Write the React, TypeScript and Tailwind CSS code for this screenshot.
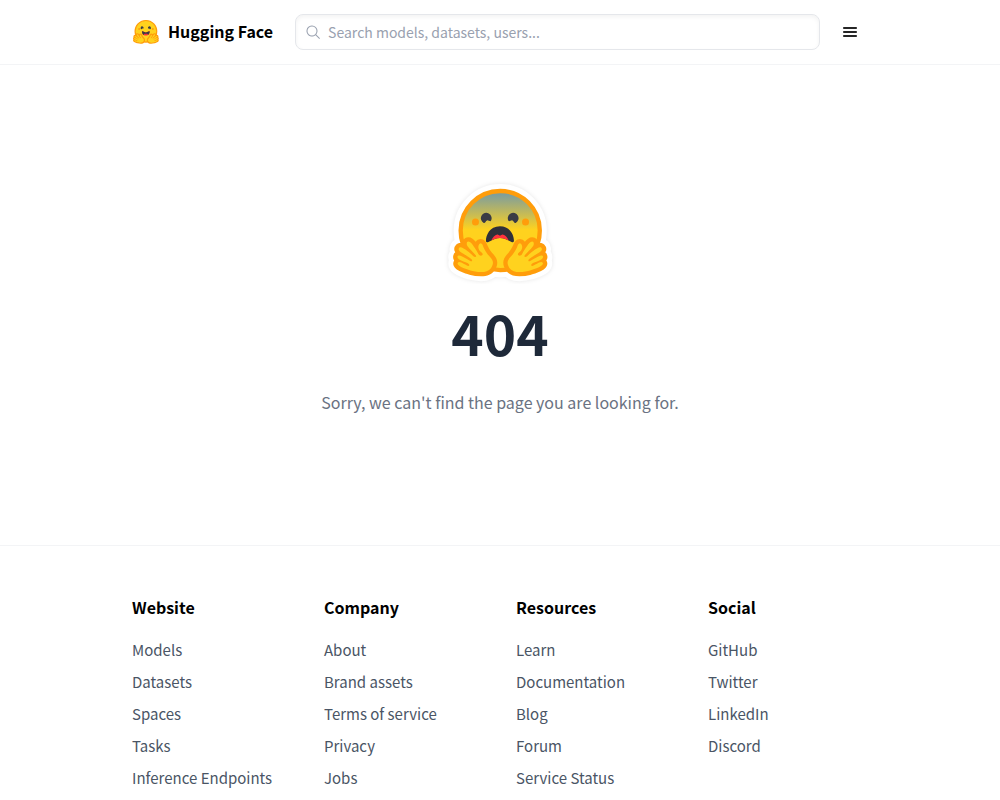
import React, { useState } from 'react';

const HAND =
  'M17.52 48c-1.62 0-3.06.66-4.07 1.87a5.97 5.97 0 0 0-1.33 3.76 7.1 7.1 0 0 0-1.94-.3c-1.55 0-2.95.59-3.94 1.66a5.8 5.8 0 0 0-.8 7 5.3 5.3 0 0 0-1.79 2.82c-.24.9-.48 2.8.8 4.74a5.22 5.22 0 0 0-.37 5.02c1.02 2.32 3.57 4.14 8.52 6.1 3.07 1.22 5.89 2 5.91 2.01a44.33 44.33 0 0 0 10.93 1.6c5.86 0 10.05-1.8 12.46-5.34 3.88-5.69 3.33-10.9-1.7-15.92-2.77-2.78-4.62-6.87-5-7.77-.78-2.66-2.84-5.62-6.25-5.62a5.7 5.7 0 0 0-4.6 2.46c-1-1.26-1.98-2.25-2.86-2.82A7.4 7.4 0 0 0 17.52 48Z';
const PALM =
  'M38.6 76.69c2.75-4.04 2.55-7.07-1.22-10.84-3.78-3.77-5.98-9.3-5.98-9.3s-.82-3.2-2.69-2.9c-1.87.3-3.24 5.08.68 8.01 3.91 2.93-.78 4.92-2.29 2.17-1.5-2.75-5.62-9.82-7.76-11.18-2.13-1.35-3.63-.6-3.13 2.2.5 2.79 9.43 9.55 8.56 11-.87 1.47-3.93-1.71-3.93-1.71s-9.57-8.71-11.66-6.44c-2.08 2.27 1.59 4.17 6.8 7.33 5.23 3.16 5.64 4 4.9 5.2-.75 1.2-12.28-8.53-13.36-4.4-1.08 4.11 11.77 5.3 10.98 8.15-.8 2.85-9.06-5.38-10.74-2.18-1.7 3.21 11.65 6.98 11.76 7.01 4.3 1.12 15.25 3.49 19.08-2.12Z';
const MIRROR = 'translate(94.5 0) scale(-1 1)';

const Hand = () => (
  <>
    <path fill="#FF9D0B" d={HAND} />
    <path fill="#FFD21E" d={PALM} />
  </>
);

const Eyes = () => (
  <path
    fill="#3A3B45"
    d="M58.5 32.3c1.28.44 1.78 3.06 3.07 2.38a5 5 0 1 0-6.76-2.07c.61 1.15 2.55-.72 3.7-.32ZM34.95 32.3c-1.28.44-1.79 3.06-3.07 2.38a5 5 0 1 1 6.76-2.07c-.61 1.15-2.56-.72-3.7-.32Z"
  />
);

const Cheeks = () => (
  <>
    <circle cx="70.71" cy="33.75" r="3.25" fill="#FF9D0B" />
    <circle cx="24.21" cy="33.75" r="3.25" fill="#FF9D0B" />
  </>
);

const Logo = ({ className }: { className?: string }) => (
  <svg className={className} viewBox="0 0 95 88" fill="none" aria-hidden="true">
    <circle cx="47.21" cy="41.75" r="36.75" fill="#FFD21E" stroke="#FF9D0B" strokeWidth="4" />
    <Eyes />
    <path
      fill="#FF323D"
      d="M46.96 56.29c9.83 0 13-8.76 13-13.26 0-2.34-1.57-1.6-4.09-.36-2.33 1.15-5.46 2.74-8.9 2.74-7.19 0-13-6.88-13-2.38s3.16 13.26 13 13.26Z"
    />
    <path
      fill="#3A3B45"
      fillRule="evenodd"
      d="M39.43 54a8.7 8.7 0 0 1 5.3-4.49c.4-.12.81.57 1.24 1.28.4.68.82 1.37 1.24 1.37.45 0 .9-.68 1.33-1.35.45-.7.89-1.38 1.32-1.25a8.61 8.61 0 0 1 5 4.17c3.73-2.94 5.1-7.74 5.1-10.7 0-2.34-1.57-1.6-4.09-.36l-.14.07c-2.31 1.15-5.39 2.67-8.77 2.67s-6.45-1.52-8.77-2.67c-2.6-1.29-4.23-2.1-4.23.29 0 3.05 1.46 8.06 5.47 10.97Z"
    />
    <Cheeks />
    <Hand />
    <g transform={MIRROR}>
      <Hand />
    </g>
  </svg>
);

const Silhouette = () => (
  <>
    <circle cx="47.21" cy="41.75" r="38.75" />
    <path d={HAND} />
    <path d={HAND} transform={MIRROR} />
  </>
);

const ScaredFace = ({ className }: { className?: string }) => (
  <svg className={className} viewBox="-5 -8 104 99" fill="none" aria-hidden="true">
    <defs>
      <linearGradient id="pale" x1="47.2" y1="5" x2="47.2" y2="41" gradientUnits="userSpaceOnUse">
        <stop stopColor="#7299A8" />
        <stop offset="1" stopColor="#FFD21E" />
      </linearGradient>
    </defs>
    <g
      className="drop-shadow-[0_0_2px_rgb(0_0_0/0.1)]"
      fill="#fff"
      stroke="#fff"
      strokeWidth="9"
      strokeLinejoin="round"
    >
      <Silhouette />
    </g>
    <circle cx="47.21" cy="41.75" r="36.75" fill="url(#pale)" stroke="#FF9D0B" strokeWidth="4" />
    <Eyes />
    <path
      fill="#2F303A"
      d="M46.96 37.8c9.83 0 13 8.76 13 13.2 0 2.4-1.6 1.6-4.1.4-2.3-1.2-5.4-2.7-8.9-2.7s-6.5 1.5-8.8 2.7c-2.6 1.2-4.2 2-4.2-.4 0-4.4 3.16-13.2 13-13.2Z"
    />
    <path
      fill="#FF323D"
      d="M39 51c1.2-3 3.2-4.9 5.4-5.6.9-.2 1.7 1 2.6 1s1.7-1.2 2.6-1c2.3.7 4.2 2.6 5.4 5.5-2.5-1.2-5.1-2.2-8-2.2s-5.6 1-8 2.3Z"
    />
    <Cheeks />
    <Hand />
    <g transform={MIRROR}>
      <Hand />
    </g>
  </svg>
);

const columns = [
  { title: 'Website', links: ['Models', 'Datasets', 'Spaces', 'Tasks', 'Inference Endpoints'] },
  { title: 'Company', links: ['About', 'Brand assets', 'Terms of service', 'Privacy', 'Jobs'] },
  { title: 'Resources', links: ['Learn', 'Documentation', 'Blog', 'Forum', 'Service Status'] },
  { title: 'Social', links: ['GitHub', 'Twitter', 'LinkedIn', 'Discord'] },
];

const Header = () => {
  const [query, setQuery] = useState('');

  return (
    <header className="border-b border-gray-100">
      <div className="mx-auto flex h-16 max-w-3xl items-center px-4">
        <a href="#" className="mr-5.5 flex shrink-0 items-center gap-2">
          <Logo className="w-7" />
          <span className="pb-0.5 text-base font-bold whitespace-nowrap text-black">Hugging Face</span>
        </a>
        <div className="relative mr-4 flex-1">
          <input
            type="text"
            aria-label="Search"
            value={query}
            onChange={(e) => setQuery(e.target.value)}
            placeholder="Search models, datasets, users..."
            className="block h-9 w-full rounded-lg border border-gray-200 pr-3 pl-8 text-sm text-gray-900 shadow-inner outline-none placeholder:text-gray-400"
          />
          <svg
            className="pointer-events-none absolute top-0 bottom-0 left-2.5 my-auto w-4 text-gray-400"
            viewBox="0 0 32 32"
            fill="currentColor"
            aria-hidden="true"
          >
            <path d="M30 28.59 22.45 21A11 11 0 1 0 21 22.45L28.59 30ZM5 14a9 9 0 1 1 9 9 9 9 0 0 1-9-9Z" />
          </svg>
        </div>
        <button type="button" aria-label="Menu" className="mr-1 flex h-7 w-7 items-center justify-center text-neutral-800">
          <svg className="w-5" viewBox="0 0 20 20" fill="currentColor" aria-hidden="true">
            <path d="M3.2 5.1h13.6v1.8H3.2zM3.2 9.1h13.6v1.8H3.2zM3.2 13.1h13.6v1.8H3.2z" />
          </svg>
        </button>
      </div>
    </header>
  );
};

export default function App() {
  return (
    <div className="flex min-h-screen flex-col bg-white font-['Source_Sans_Pro','Noto_Sans_CJK_SC',sans-serif]">
      <Header />
      <main className="flex h-120 flex-col items-center px-4 pt-28 text-center">
        <ScaredFace className="w-28" />
        <h1 className="mt-4 text-[55px] leading-16 font-bold text-gray-800">404</h1>
        <p className="mt-6.5 text-base text-gray-500">Sorry, we can't find the page you are looking for.</p>
      </main>
      <footer className="border-t border-gray-100">
        <div className="mx-auto grid max-w-3xl grid-cols-4 gap-8 px-4 pt-12 pb-2">
          {columns.map((col) => (
            <div key={col.title}>
              <h2 className="mb-4.5 text-base leading-6.5 font-semibold text-black">{col.title}</h2>
              <ul className="space-y-2">
                {col.links.map((link) => (
                  <li key={link}>
                    <a href="#" className="block text-[15px] leading-6 whitespace-nowrap text-gray-600">
                      {link}
                    </a>
                  </li>
                ))}
              </ul>
            </div>
          ))}
        </div>
      </footer>
    </div>
  );
}
